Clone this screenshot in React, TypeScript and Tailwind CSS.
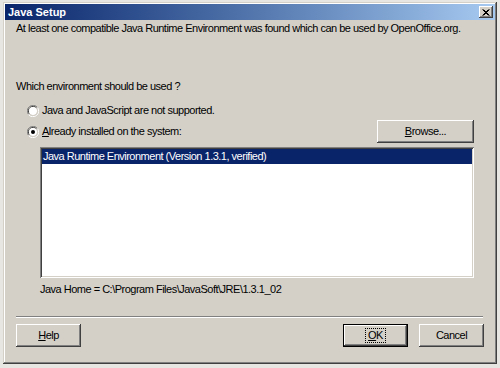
import React from 'react';

const font = { fontFamily: '"Liberation Sans", Arial, sans-serif' };

function Radio({ checked }: { checked?: boolean }) {
  return (
    <svg width="12" height="12" viewBox="0 0 12 12" className="shrink-0">
      <path d="M10.5 2.5 A5 5 0 0 0 1.5 9.5" fill="none" stroke="#808080" strokeWidth="1" />
      <path d="M9.5 3 A4 4 0 0 0 2.5 9" fill="none" stroke="#404040" strokeWidth="1" />
      <circle cx="6" cy="6" r="4" fill="#ffffff" />
      <path d="M1.5 9.5 A5 5 0 0 0 10.5 2.5" fill="none" stroke="#ffffff" strokeWidth="1" />
      <path d="M2.5 9 A4 4 0 0 0 9.5 3" fill="none" stroke="#d4d0c8" strokeWidth="1" />
      {checked && <circle cx="6" cy="6" r="2" fill="#000000" />}
    </svg>
  );
}

function Button({
  children,
  width,
  isDefault,
}: {
  children: React.ReactNode;
  width: string;
  isDefault?: boolean;
}) {
  return (
    <div
      className={`${width} h-[23px] shrink-0 flex items-center justify-center text-black bg-[#d4d0c8] ${
        isDefault
          ? 'shadow-[inset_0_0_0_1px_#000,inset_-2px_-2px_#404040,inset_2px_2px_#fff,inset_-3px_-3px_#808080]'
          : 'shadow-[inset_-1px_-1px_#404040,inset_1px_1px_#fff,inset_-2px_-2px_#808080]'
      }`}
    >
      {children}
    </div>
  );
}

export default function App() {
  return (
    <div className="w-[500px] h-[368px] bg-[#e8e6e2] pt-[2px] pl-[3px]" style={font}>
      <div className="w-[494px] h-[362px] bg-[#d4d0c8] p-[2px] flex flex-col shadow-[inset_-1px_-1px_#404040,inset_1px_1px_#d4d0c8,inset_-2px_-2px_#808080,inset_2px_2px_#fff]">
        {/* Title bar */}
        <div className="h-[16px] shrink-0 flex items-center justify-between pl-[3px] pr-[2px] bg-gradient-to-r from-[#0a246a] to-[#a6caf0]">
          <span className="text-[11px] font-bold text-white leading-none">Java Setup</span>
          <div className="w-[14px] h-[12px] flex items-center justify-center bg-[#d4d0c8] shadow-[inset_-1px_-1px_#404040,inset_1px_1px_#fff,inset_-2px_-2px_#808080]">
            <svg width="8" height="7" viewBox="0 0 8 7">
              <path d="M0.5 0.5 L6.5 6.5 M1.5 0.5 L7.5 6.5 M6.5 0.5 L0.5 6.5 M7.5 0.5 L1.5 6.5" stroke="#000" strokeWidth="1" />
            </svg>
          </div>
        </div>

        {/* Body */}
        <div className="flex flex-col px-[11px] text-[11px] tracking-[-0.5px] text-black leading-[13px]">
          <p className="mt-[2px] whitespace-nowrap">
            At least one compatible Java Runtime Environment was found which can be used by OpenOffice.org.
          </p>

          <p className="mt-[45px] whitespace-nowrap">Which environment should be used ?</p>

          <div className="mt-[11px] ml-[11px] h-[13px] flex items-center gap-[3px]">
            <Radio />
            <span>Java and JavaScript are not supported.</span>
          </div>

          <div className="mt-[3px] ml-[11px] h-[23px] flex items-center justify-between">
            <div className="flex items-center gap-[3px]">
              <Radio checked />
              <span>
                <u>A</u>lready installed on the system:
              </span>
            </div>
            <div className="mr-[10px]">
              <Button width="w-[97px]">
                <span>
                  <u>B</u>rowse...
                </span>
              </Button>
            </div>
          </div>

          <div className="mt-[4px] ml-[24px] mr-[10px] h-[131px] bg-white p-[2px] shadow-[inset_1px_1px_#808080,inset_-1px_-1px_#fff,inset_2px_2px_#404040,inset_-2px_-2px_#d4d0c8]">
            <div className="h-[15px] bg-[#0a246a] text-white flex items-center pl-[1px]">
              Java Runtime Environment (Version 1.3.1, verified)
            </div>
          </div>

          <p className="mt-[5px] ml-[24px] whitespace-nowrap">Java Home = C:\Program Files\JavaSoft\JRE\1.3.1_02</p>

          <div className="mt-[20px] mr-[1px] h-[2px] border-t border-t-[#808080] border-b border-b-white" />

          <div className="mt-[6px] flex items-center">
            <Button width="w-[65px]">
              <span>
                <u>H</u>elp
              </span>
            </Button>
            <div className="flex-1" />
            <Button width="w-[65px]" isDefault>
              <span className="px-[2px] outline outline-1 outline-dotted outline-black">
                <u>O</u>K
              </span>
            </Button>
            <div className="w-[11px]" />
            <Button width="w-[65px]">Cancel</Button>
          </div>
        </div>
      </div>
    </div>
  );
}
